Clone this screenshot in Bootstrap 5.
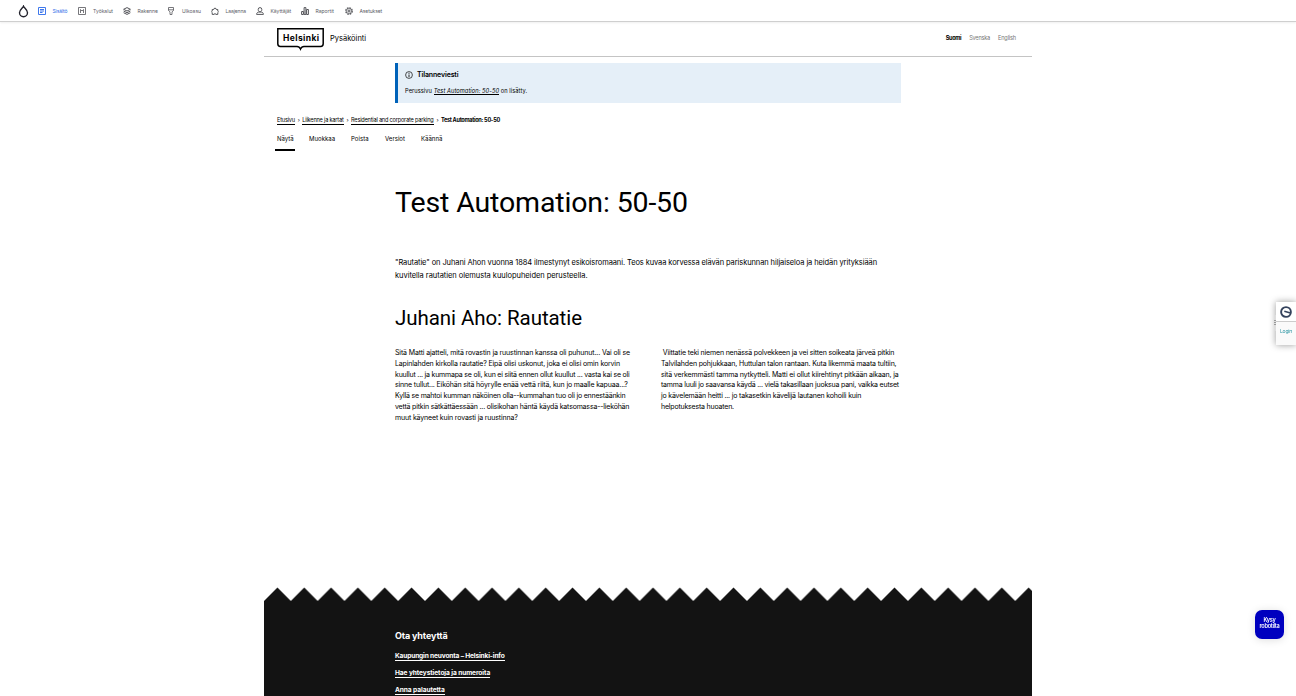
<!DOCTYPE html>
<html lang="fi">
<head>
<meta charset="utf-8">
<meta name="viewport" content="width=device-width, initial-scale=1">
<title>Test Automation: 50-50 | Pysäköinti</title>
<link href="https://cdn.jsdelivr.net/npm/bootstrap@5.3.0/dist/css/bootstrap.min.css" rel="stylesheet">
<style>
body{font-family:Inter,"Liberation Sans",sans-serif;background:#fff;color:#000;height:100vh;overflow:hidden;font-size:7px}
a{color:inherit}
svg{flex:none;display:block}
.admin-bar{height:22px;padding:1px 0 0 18px;border-bottom:1px solid #cfcfcf;box-shadow:0 1px 2px #0001;font-size:5px;color:#5b5c66}
.admin-item{height:20px;gap:7px;white-space:nowrap}
.admin-item span{padding-top:1px}
.admin-item svg{width:8px;height:8px;fill:none;stroke:#55565b;stroke-width:1}
.admin-item.current{color:#2e6de8}
.admin-item.current svg{stroke:#3f78ec}
.page{width:768px}
.site-head{height:35px;border-bottom:1px solid #c4c4c4;padding:0 16px 0 13px}
.site-name{font-size:7.5px;margin:0 0 0 6px}
.langs{gap:8px;font-size:5.6px;color:#777;margin-top:-1px}
.text-col{margin-left:131px;width:506px}
.notice{margin-top:6px;height:40px;background:#e5eff8;border-left:3px solid #0062b9;padding:6px 0 0 7px}
.notice h2{font-size:7px;font-weight:600;letter-spacing:-.13px;line-height:11px}
.notice p{font-size:5.7px;line-height:10px;margin-top:6px;letter-spacing:.07px}
.crumbs{height:12px;margin:11px 0 0 13px;font-size:5.6px;letter-spacing:-.2px;line-height:12px;white-space:nowrap}
.crumbs a,.ruled{text-decoration:none;border-bottom:1px solid currentColor}
.crumbs a{line-height:7px;margin-top:1px}
.crumbs .sep{padding:0 2.5px 0 3px}
.tabs-row{margin:7px 0 0 11px;font-size:6px;letter-spacing:.03px}
.tabs-row a{height:18px;line-height:12px;padding:0 1px 0 2px;text-decoration:none}
.tabs-row .on{border-bottom:2px solid #000}
.page-title{font:400 28.500px/36px Roboto,sans-serif;letter-spacing:-.14px;margin:34px 0 0}
.lead-text{font-size:7.5px;line-height:13px;margin:35px 0 0;white-space:nowrap}
.sub-title{font:400 20.500px/26px Roboto,sans-serif;letter-spacing:-.07px;margin:23px 0 0}
.halves{margin-top:17px;line-height:10.8px;gap:31px}
.halves p{width:235px;white-space:nowrap}
.ln{display:block}
.s14{letter-spacing:-.14px}.s15{letter-spacing:-.153px}.s17{letter-spacing:-.174px}.s18{letter-spacing:-.183px}.s20{letter-spacing:-.2px}
.s10{letter-spacing:-.099px}.s04{letter-spacing:-.043px}
.foot-edge{margin-top:163px;width:768px;height:14px}
.foot{height:97px;background:#131313;color:#fff;padding:28px 0 0 131px}
.foot h2{font-size:9px;line-height:13px;font-weight:700;letter-spacing:-.14px;margin-bottom:9px}
.foot li{height:17px;line-height:10px}
.foot a{font-size:6.6px;font-weight:700;letter-spacing:-.09px;text-decoration:none;display:inline-block;height:10px;border-bottom:1px solid #fff}
.foot li:first-child a{letter-spacing:-.155px}
.login-tab{right:0;top:302px;width:20px;height:43px;background:#fafafa;box-shadow:0 0 7px #0006;font-size:5px;color:#2492a0}
.login-mark{height:20px;background:#fff;border-bottom:1px solid #ccc}
.grip{left:-2px;top:13px;width:2px;height:16px;background:linear-gradient(#ddd 0 5px,#999 5px 6px,#ddd 6px 7px,#999 7px 8px,#ddd 8px 9px,#999 9px 10px,#ddd 10px)}
.chat{right:12px;top:610px;width:29px;height:29px;border-radius:7px;background:#0000bf;color:#fff;font-size:5.6px;line-height:6px;font-weight:600;letter-spacing:-.3px;box-shadow:0 1px 8px #0002}
</style>
</head>
<body>
<nav class="admin-bar d-flex align-items-center">
  <svg width="11" height="13" viewBox="0 0 11 13" fill="none" stroke="#22222c" stroke-width="1.4"><path d="M5.5 1.2C4.8 3 1.5 4.8 1.5 7.7a4 4 0 0 0 8 0C9.500 4.8 6.200 3 5.500 1.200Z"/></svg>
  <div class="admin-item current d-flex align-items-center" style="margin-left:8.500px;width:40.500px"><svg viewBox="0 0 8 8"><path d="M.5.5h7v7h-7zM2 2.500h4M2 4h4M2 5.500h2.500"/></svg><span style="letter-spacing:-.107px">Sisältö</span></div>
  <div class="admin-item d-flex align-items-center" style="width:44.500px"><svg viewBox="0 0 8 8"><path d="M.5.5h7v7h-7zM2.500 6V2.500L4 4l1.500-1.500V6" stroke-width=".8"/></svg><span>Työkalut</span></div>
  <div class="admin-item d-flex align-items-center" style="width:44.500px"><svg viewBox="0 0 8 8"><path d="M4 .6l3.400 1.700L4 4 .6 2.300zM.6 4L4 5.700 7.400 4M.6 5.700L4 7.400l3.400-1.700"/></svg><span>Rakenne</span></div>
  <div class="admin-item d-flex align-items-center" style="width:43.500px"><svg viewBox="0 0 8 8"><path d="M1.500.5h5v3L5 4.800v2.700H3V4.800L1.500 3.500zM1.500 2.800h5" stroke-width=".8"/></svg><span>Ulkoasu</span></div>
  <div class="admin-item d-flex align-items-center" style="width:45px"><svg viewBox="0 0 8 8"><path d="M1.200 2.500h1.500a1.300 1.300 0 1 1 2.600 0h1.500v1.500a.9.9 0 0 1 0 1.600v1.800H4.800a.8.8 0 0 0-1.600 0h-2V5.600a.9.9 0 0 1 0-1.600z"/></svg><span style="letter-spacing:-.1px">Laajenna</span></div>
  <div class="admin-item d-flex align-items-center" style="width:45px"><svg viewBox="0 0 8 8"><path d="M4 .6a1.800 1.800 0 0 1 1.800 1.900C5.800 4 5 4.700 4 4.700S2.200 4 2.200 2.500A1.800 1.800 0 0 1 4 .6zM.6 7.400c0-1.500 1-2.200 2.200-2.400h2.400c1.200.2 2.200.9 2.200 2.400z"/></svg><span>Käyttäjät</span></div>
  <div class="admin-item d-flex align-items-center" style="width:43.500px"><svg viewBox="0 0 8 8"><path d="M.6 4.500h1.800v3H.6zM3.100.6h1.800v6.900H3.100zM5.600 2.500h1.800v5H5.600z"/></svg><span>Raportit</span></div>
  <div class="admin-item d-flex align-items-center" style="margin-left:.500px"><svg viewBox="0 0 8 8"><circle cx="4" cy="4" r="3.200" stroke-width="1.300" stroke-dasharray="1.700 .8"/><circle cx="4" cy="4" r="2.500" stroke-width=".6"/><circle cx="4" cy="4" r="1"/></svg><span style="letter-spacing:-.115px">Asetukset</span></div>
</nav>

<div class="page mx-auto">
  <header class="site-head d-flex align-items-center">
    <svg width="47" height="23" viewBox="0 0 47 23"><path d="M.8.800h45.400v15q0 2.600-2.600 2.600H27q-2.400 0-3.500 2.600-1.100-2.600-3.500-2.600H3.400Q.8 18.400.8 15.800z" fill="#fff" stroke="#000" stroke-width="1.500"/><text x="24" y="13" text-anchor="middle" textLength="36" font-family="Inter" font-size="8.500" font-weight="700">Helsinki</text></svg>
    <span class="site-name">Pysäköinti</span>
    <div class="langs d-flex ms-auto"><span class="fw-bold text-black" style="letter-spacing:-.34px">Suomi</span><span style="letter-spacing:-.22px">Svenska</span><span style="letter-spacing:-.154px">English</span></div>
  </header>

  <section class="notice text-col">
    <h2 class="m-0 d-flex align-items-center"><svg class="me-1" width="8" height="8" viewBox="0 0 8 8" fill="none" stroke="#222"><circle cx="4" cy="4" r="3.400" stroke-width=".8"/><path d="M4 3.500v2.600M4 1.800v1" stroke-width="1"/></svg>Tilanneviesti</h2>
    <p class="mb-0">Perussivu <a class="ruled fst-italic" href="#">Test Automation: 50-50</a> on lisätty.</p>
  </section>

  <nav class="crumbs d-flex align-items-center"><a href="#">Etusivu</a><span class="sep">›</span><a href="#">Liikenne ja kartat</a><span class="sep">›</span><a href="#">Residential and corporate parking</a><span class="sep">›</span><span class="fw-bold" style="letter-spacing:-.3px">Test Automation: 50-50</span></nav>
  <nav class="tabs-row d-flex"><a class="on" style="width:20px" href="#">Näytä</a><a style="margin-left:12px;width:30px" href="#">Muokkaa</a><a style="margin-left:12px;width:22px" href="#">Poista</a><a style="margin-left:12px;width:24px" href="#">Versiot</a><a style="margin-left:12px" href="#">Käännä</a></nav>

  <main class="text-col">
    <h1 class="page-title">Test Automation: 50-50</h1>
    <p class="lead-text"><span class="ln s10">"Rautatie" on Juhani Ahon vuonna 1884 ilmestynyt esikoisromaani. Teos kuvaa korvessa elävän pariskunnan hiljaiseloa ja heidän yrityksiään</span><span class="ln s04">kuvitella rautatien olemusta kuulopuheiden perusteella.</span></p>
    <h2 class="sub-title">Juhani Aho: Rautatie</h2>
    <div class="halves d-flex">
      <p class="m-0"><span class="ln s14">Sitä Matti ajatteli, mitä rovastin ja ruustinnan kanssa oli puhunut... Vai oli se</span><span class="ln s15">Lapinlahden kirkolla rautatie? Eipä olisi uskonut, joka ei olisi omin korvin</span><span class="ln s20">kuullut ... ja kummapa se oli, kun ei siitä ennen ollut kuullut ... vasta kai se oli</span><span class="ln s15">sinne tullut... Eiköhän sitä höyrylle enää vettä riitä, kun jo maalle kapuaa...?</span><span class="ln s20">Kyllä se mahtoi kumman näköinen olla--kummahan tuo oli jo ennestäänkin</span><span class="ln s18">vettä pitkin sätkättäessään ... olisikohan häntä käydä katsomassa--lieköhän</span><span class="ln s15">muut käyneet kuin rovasti ja ruustinna?</span></p>
      <p class="m-0"><span class="ln s17">&nbsp;Viittatie teki niemen nenässä polvekkeen ja vei sitten soikeata järveä pitkin</span><span class="ln s15">Talvilahden pohjukkaan, Huttulan talon rantaan. Kuta likemmä maata tultiin,</span><span class="ln s15">sitä verkemmästi tamma nytkytteli. Matti ei ollut kiirehtinyt pitkään aikaan, ja</span><span class="ln s20">tamma luuli jo saavansa käydä ... vielä takasillaan juoksua pani, vaikka eutset</span><span class="ln s18">jo kävelemään heitti ... jo takasetkin kävelijä lautanen kohoili kuin</span><span class="ln s20">helpotuksesta huoaten.</span></p>
    </div>
  </main>

  <svg class="foot-edge" viewBox="0 0 768 14"><defs><pattern id="zig" width="26.830" height="14" patternUnits="userSpaceOnUse"><path d="M0 14L13.415.600 26.830 14z" fill="#131313"/></pattern></defs><rect width="768" height="14" fill="url(#zig)"/></svg>
  <footer class="foot">
    <h2 class="mt-0">Ota yhteyttä</h2>
    <ul class="list-unstyled m-0"><li><a href="#">Kaupungin neuvonta – Helsinki-info</a></li><li><a href="#">Hae yhteystietoja ja numeroita</a></li><li><a href="#">Anna palautetta</a></li></ul>
  </footer>
</div>

<aside class="login-tab position-fixed text-center">
  <div class="grip position-absolute"></div>
  <div class="login-mark d-flex align-items-center justify-content-center"><svg width="12" height="12" viewBox="0 0 12 12" fill="none" stroke="#35435d" stroke-width="1.900"><circle cx="6" cy="6" r="4.900"/><path d="M4.300 5.200L10.500 7" stroke-width="1.500"/></svg></div>
  <div style="line-height:19px;letter-spacing:-.2px">Login</div>
</aside>
<button class="chat position-fixed border-0 p-0 pb-1 text-center" type="button">Kysy<br>robotilta</button>
<script src="https://cdn.jsdelivr.net/npm/bootstrap@5.3.0/dist/js/bootstrap.bundle.min.js"></script>
</body>
</html>
